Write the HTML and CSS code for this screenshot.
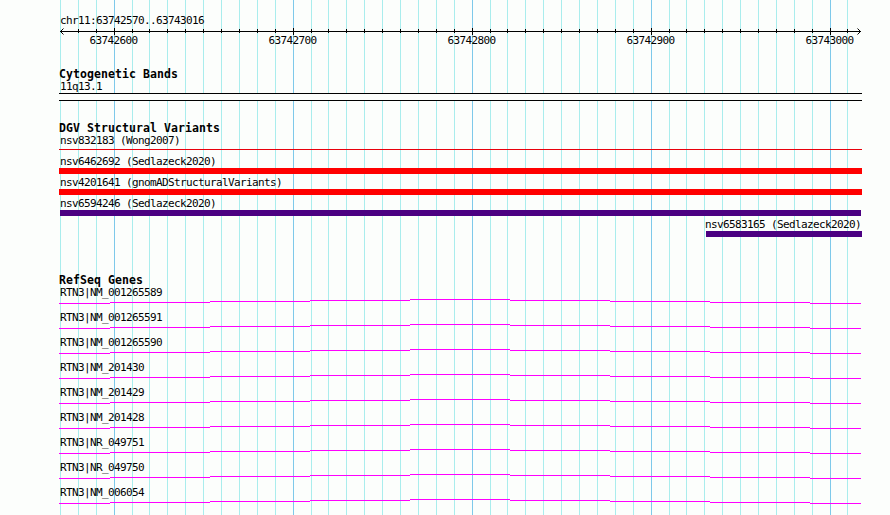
FILE: index.html
```
<!DOCTYPE html>
<html lang="en">
<head>
<meta charset="utf-8">
<title>chr11:63742570..63743016</title>
<link rel="stylesheet" href="styles.css">
</head>
<body>
<main class="browser">
  <svg class="grid" width="890" height="515" aria-hidden="true">
    <path id="minor" class="minor"/>
    <path id="major" class="major"/>
  </svg>
  <section class="overview">
    <p class="label">chr11:63742570..63743016</p>
    <svg class="axis" width="803" height="9" aria-hidden="true"><path id="ticks"/><path d="M1 4.5H802M1.5 4.5L4.5 1.5M1.5 4.5L4.5 7.5M801.5 4.5L798.5 1.5M801.5 4.5L798.5 7.5"/></svg>
    <div class="scale"><span>63742600</span><span>63742700</span><span>63742800</span><span>63742900</span><span>63743000</span></div>
  </section>
  <section class="bands">
    <h2>Cytogenetic Bands</h2>
    <p class="label">11q13.1</p>
    <div class="band"></div>
  </section>
  <section class="variants">
    <h2>DGV Structural Variants</h2>
    <div class="variant"><p class="label">nsv832183 (Wong2007)</p><div class="bar thin"></div></div>
    <div class="variant"><p class="label">nsv6462692 (Sedlazeck2020)</p><div class="bar gain"></div></div>
    <div class="variant"><p class="label">nsv4201641 (gnomADStructuralVariants)</p><div class="bar gain"></div></div>
    <div class="variant"><p class="label">nsv6594246 (Sedlazeck2020)</p><div class="bar complex wide"></div></div>
    <div class="variant short"><p class="label">nsv6583165 (Sedlazeck2020)</p><div class="bar complex"></div></div>
  </section>
  <section class="genes" id="genes">
    <h2>RefSeq Genes</h2>
  </section>
</main>
<script src="script.js"></script>
</body>
</html>
```
FILE: styles.css
```
* { box-sizing: border-box; }
body { margin: 0; background: #fcfefc; color: #000; overflow: hidden; }
.browser { position: relative; width: 890px; height: 515px; padding: 15px 28px 0 59px; overflow: hidden; }
.grid { position: absolute; left: 0; top: 0; z-index: -1; }
.grid path, .axis path, .intron path { fill: none; stroke-width: 1; }
.minor { stroke: #a9eded; }
.major { stroke: #7ec9ea; }
p, h2 { margin: 0; white-space: pre; }
.label, .scale { font: 11px/12px "DejaVu Sans Mono", monospace; letter-spacing: -0.622px; }
.label { padding-left: 1px; height: 12px; }
h2 { font: bold 11.5px/13px "DejaVu Sans Mono", monospace; letter-spacing: 0.077px; height: 13px; }
.overview { height: 53px; }
.axis { display: block; }
.axis path { stroke: #000; }
.scale { display: grid; grid-template-columns: repeat(5, 179px); margin-left: -35px; text-align: center; height: 12px; margin-top: -1px; }
.bands { height: 54px; }
.band { width: 803px; height: 8px; border: solid #000; border-width: 1px 0; background: #fcfefc; }
.bands .label { height: 12px; }
.variants { height: 152px; }
.variant { height: 21px; }
.bar { width: 803px; height: 6px; }
.variant .thin { height: 1px; margin-top: 2px; background: #e8000c; }
.gain { background: #f00; }
.complex { background: #4b0082; }
.wide { width: 801px; margin-left: 1px; }
.short { width: 157px; margin-left: 646px; }
.short .label { padding: 0; }
.short .bar { width: 156px; margin-left: 1px; }
.gene { height: 25px; }
.intron { display: block; margin-top: -1px; }
.intron path { stroke: #f0f; }
```
FILE: script.js
```
const line = (x, top, bottom) => `M${x + 0.5} ${top}V${bottom}`;
const positions = [60, 78, 96];
for (const start of [114, 293, 472, 651]) {
  for (const step of [0, 18, 35, 53, 71, 89, 107, 125, 143, 161]) {
    positions.push(start + step);
  }
}
positions.push(830, 847);
const isMajor = x => (x - 114) % 179 === 0;
document.getElementById('minor').setAttribute('d', positions.filter(x => !isMajor(x)).map(x => line(x, 0, 515)).join(''));
document.getElementById('major').setAttribute('d', positions.filter(isMajor).map(x => line(x, 0, 515)).join(''));
document.getElementById('ticks').setAttribute('d', positions.slice(1).map(x => isMajor(x) ? line(x - 59, 1, 8) : line(x - 59, 2, 6)).join(''));
const genes = ['NM_001265589', 'NM_001265591', 'NM_001265590', 'NM_201430', 'NM_201429', 'NM_201428', 'NR_049751', 'NR_049750', 'NM_006054'];
const intron = 'M0 5.5H51M51 4.5H151M151 3.5H251M251 2.5H351M351 1.5H451M451 2.5H551M551 3.5H651M651 4.5H751M751 5.5H802';
for (const name of genes) {
  document.getElementById('genes').insertAdjacentHTML('beforeend', `<div class="gene"><p class="label">RTN3|${name}</p><svg class="intron" width="803" height="7"><path d="${intron}"/></svg></div>`);
}
```
